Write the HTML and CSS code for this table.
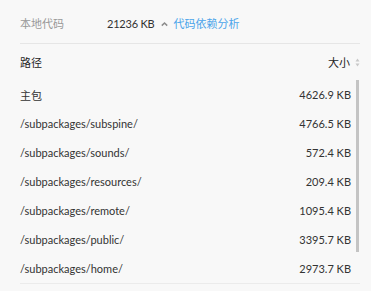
FILE: index.html
```html
<!DOCTYPE html>
<html lang="zh-CN">
<head>
<meta charset="utf-8">
<link rel="stylesheet" href="styles.css">
</head>
<body>
<div class="panel">
  <div class="summary">
    <span class="label">本地代码</span>
    <span class="total">21236 KB</span>
    <svg class="caret" width="7" height="6" viewBox="0 0 7 6"><path d="M0.8 4.6 L3.5 2 L6.2 4.6" fill="none" stroke="#8c8c8c" stroke-width="1.5"/></svg>
    <a class="link">代码依赖分析</a>
  </div>
  <div class="thead">
    <span>路径</span>
    <span class="sortcol">大小
      <svg class="sort" width="5" height="9" viewBox="0 0 5 9"><path d="M2.5 0.5 L4.5 3.5 L0.5 3.5 Z" fill="#c8c8c8"/><path d="M2.5 8.5 L4.5 5.5 L0.5 5.5 Z" fill="#c8c8c8"/></svg>
    </span>
  </div>
  <div class="tbody">
    <div class="row"><span>主包</span><span class="size">4626.9 KB</span></div>
    <div class="row"><span>/subpackages/subspine/</span><span class="size">4766.5 KB</span></div>
    <div class="row"><span>/subpackages/sounds/</span><span class="size">572.4 KB</span></div>
    <div class="row"><span>/subpackages/resources/</span><span class="size">209.4 KB</span></div>
    <div class="row"><span>/subpackages/remote/</span><span class="size">1095.4 KB</span></div>
    <div class="row"><span>/subpackages/public/</span><span class="size">3395.7 KB</span></div>
    <div class="row"><span>/subpackages/home/</span><span class="size">2973.7 KB</span></div>
    <div class="scrollbar"></div>
  </div>
</div>
</body>
</html>
```
FILE: styles.css
```css
html, body {
  margin: 0;
  padding: 0;
  background: #f8f8f8;
}
body {
  font-family: "Lato", "Noto Sans CJK SC", sans-serif;
  font-size: 11px;
  color: #333;
}
.panel {
  padding: 0 11px 0 20px;
}
.summary {
  display: flex;
  align-items: center;
  height: 18px;
  line-height: 18px;
  padding: 15px 0 10px;
  border-bottom: 1px solid #e6e6e6;
}
.label {
  color: #999;
  width: 87px;
}
.total {
  color: #333;
  letter-spacing: -0.2px;
}
.caret {
  margin: 0 6px 0 6px;
}
.link {
  color: #4ba4ea;
}
.thead {
  display: flex;
  justify-content: space-between;
  align-items: center;
  height: 36px;
  color: #222;
}
.sortcol {
  display: flex;
  align-items: center;
  gap: 5px;
}
.tbody {
  position: relative;
  border-bottom: 1px solid #ebebeb;
}
.row {
  display: flex;
  justify-content: space-between;
  align-items: center;
  height: 29px;
  padding-right: 9px;
}
.size {
  color: #333;
}
.scrollbar {
  position: absolute;
  right: 1px;
  top: 0;
  width: 3px;
  height: 172px;
  background: #c4c4c4;
}
```
